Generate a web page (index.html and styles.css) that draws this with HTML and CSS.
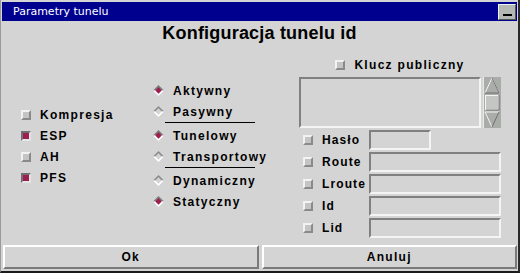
FILE: index.html
```html
<!DOCTYPE html>
<html lang="pl">
<head>
<meta charset="utf-8">
<title>Parametry tunelu</title>
<link rel="stylesheet" href="styles.css">
</head>
<body>
<div class="window">
  <div class="titlebar">
    <span class="title">Parametry tunelu</span>
    <span class="minbtn"><span class="dash"></span></span>
  </div>
  <h1 class="heading">Konfiguracja tunelu id</h1>
  <div class="main">
    <div class="col col-left">
      <div class="row"><span class="cb"></span><span class="lbl">Kompresja</span></div>
      <div class="row"><span class="cb on"></span><span class="lbl">ESP</span></div>
      <div class="row"><span class="cb"></span><span class="lbl">AH</span></div>
      <div class="row"><span class="cb on"></span><span class="lbl">PFS</span></div>
    </div>
    <div class="col col-mid">
      <div class="row"><svg class="rd" viewBox="0 0 11 11"><polygon points="5.5,0 11,5.5 0,5.5" fill="#7a7a7a"/><polygon points="0,5.5 11,5.5 5.5,11" fill="#ffffff"/><polygon points="5.5,2.3 8.7,5.5 5.5,8.7 2.3,5.5" fill="#9e1e50"/></svg><span class="lbl">Aktywny</span></div>
      <div class="row"><svg class="rd" viewBox="0 0 11 11"><polygon points="5.5,0 11,5.5 0,5.5" fill="#8c8c8c"/><polygon points="0,5.5 11,5.5 5.5,11" fill="#ffffff"/><polygon points="5.5,2.3 8.7,5.5 5.5,8.7 2.3,5.5" fill="#d4d4d4"/></svg><span class="lbl">Pasywny</span></div>
      <div class="sep"></div>
      <div class="row"><svg class="rd" viewBox="0 0 11 11"><polygon points="5.5,0 11,5.5 0,5.5" fill="#7a7a7a"/><polygon points="0,5.5 11,5.5 5.5,11" fill="#ffffff"/><polygon points="5.5,2.3 8.7,5.5 5.5,8.7 2.3,5.5" fill="#9e1e50"/></svg><span class="lbl">Tunelowy</span></div>
      <div class="row"><svg class="rd" viewBox="0 0 11 11"><polygon points="5.5,0 11,5.5 0,5.5" fill="#8c8c8c"/><polygon points="0,5.5 11,5.5 5.5,11" fill="#ffffff"/><polygon points="5.5,2.3 8.7,5.5 5.5,8.7 2.3,5.5" fill="#d4d4d4"/></svg><span class="lbl">Transportowy</span></div>
      <div class="sep"></div>
      <div class="row"><svg class="rd" viewBox="0 0 11 11"><polygon points="5.5,0 11,5.5 0,5.5" fill="#8c8c8c"/><polygon points="0,5.5 11,5.5 5.5,11" fill="#ffffff"/><polygon points="5.5,2.3 8.7,5.5 5.5,8.7 2.3,5.5" fill="#d4d4d4"/></svg><span class="lbl">Dynamiczny</span></div>
      <div class="row"><svg class="rd" viewBox="0 0 11 11"><polygon points="5.5,0 11,5.5 0,5.5" fill="#7a7a7a"/><polygon points="0,5.5 11,5.5 5.5,11" fill="#ffffff"/><polygon points="5.5,2.3 8.7,5.5 5.5,8.7 2.3,5.5" fill="#9e1e50"/></svg><span class="lbl">Statyczny</span></div>
    </div>
    <div class="col col-right">
      <div class="keyrow"><span class="cb"></span><span class="lbl">Klucz publiczny</span></div>
      <div class="textrow">
        <div class="textarea"></div>
        <svg class="scroll" viewBox="0 0 18 51">
          <rect x="0" y="0" width="18" height="51" fill="#a9aca9"/>
          <line x1="0.5" y1="0" x2="0.5" y2="51" stroke="#e8e8e8"/>
          <polyline points="2,16 9,1 16,16" fill="none" stroke="#f4f4f4" stroke-width="1"/>
          <line x1="9" y1="1" x2="16" y2="16" stroke="#707070"/>
          <line x1="2" y1="16" x2="16" y2="16" stroke="#707070"/>
          <rect x="2.5" y="18.5" width="13" height="14" fill="#c4c6c4" stroke="#f4f4f4"/>
          <polyline points="3,33 16,33 16,18" fill="none" stroke="#707070"/>
          <polyline points="2,35 16,35" fill="none" stroke="#f4f4f4"/>
          <polyline points="2,35 9,50" fill="none" stroke="#f4f4f4"/>
          <line x1="16" y1="35" x2="9" y2="50" stroke="#707070"/>
        </svg>
      </div>
      <div class="frow"><span class="cb"></span><span class="flbl">Hasło</span><span class="input short"></span></div>
      <div class="frow"><span class="cb"></span><span class="flbl">Route</span><span class="input"></span></div>
      <div class="frow"><span class="cb"></span><span class="flbl">Lroute</span><span class="input"></span></div>
      <div class="frow"><span class="cb"></span><span class="flbl">Id</span><span class="input"></span></div>
      <div class="frow"><span class="cb"></span><span class="flbl">Lid</span><span class="input"></span></div>
    </div>
  </div>
  <div class="buttons">
    <button class="btn">Ok</button>
    <button class="btn">Anuluj</button>
  </div>
</div>
</body>
</html>
```
FILE: styles.css
```css
html, body {
  margin: 0;
  padding: 0;
  background: #d4d4d4;
}
.window {
  width: 520px;
  height: 273px;
  box-sizing: border-box;
  background: #d4d4d4;
  border-left: 1px solid #9a9a9a;
  border-right: 2px solid #2a2a2a;
  border-bottom: 2px solid #1a1a1a;
  padding: 2px 1px 0 1px;
  display: flex;
  flex-direction: column;
  font-family: "Liberation Sans", Arial, sans-serif;
}
.titlebar {
  height: 19px;
  background: #00008f;
  display: flex;
  align-items: center;
  justify-content: space-between;
  padding-left: 11px;
  box-sizing: border-box;
}
.title {
  color: #ffffff;
  font-family: "DejaVu Sans", sans-serif;
  font-size: 11px;
  line-height: 19px;
}
.minbtn {
  width: 18px;
  height: 16px;
  box-sizing: border-box;
  margin-right: 1px;
  background: #b4b8b4;
  border-top: 1px solid #f0f0f0;
  border-left: 1px solid #f0f0f0;
  border-right: 1px solid #555555;
  border-bottom: 1px solid #555555;
  display: flex;
  align-items: flex-end;
  justify-content: center;
  padding-bottom: 3px;
}
.dash {
  width: 9px;
  height: 2px;
  background: #000;
}
.heading {
  margin: 0;
  height: 23px;
  box-sizing: border-box;
  padding-top: 2px;
  font-size: 18px;
  line-height: 21px;
  font-weight: bold;
  letter-spacing: 0.2px;
  text-align: center;
  color: #000;
}
.main {
  height: 201px;
  display: flex;
  padding-left: 19px;
}
.col {
  display: flex;
  flex-direction: column;
}
.col-left {
  width: 132px;
  padding-top: 60px;
}
.col-mid {
  width: 146px;
  padding-top: 36px;
}
.col-right {
  width: 202px;
  padding-top: 11px;
}
.row {
  height: 21px;
  display: flex;
  align-items: center;
}
.lbl, .flbl, .btn {
  font-family: "Liberation Sans", Arial, sans-serif;
  font-weight: bold;
  font-size: 12px;
  letter-spacing: 1.3px;
  color: #000;
}
.cb {
  width: 10px;
  height: 10px;
  box-sizing: border-box;
  flex: none;
  background: #c4c4c4;
  border-top: 2px solid #f2f2f2;
  border-left: 2px solid #f2f2f2;
  border-right: 2px solid #8a8a8a;
  border-bottom: 2px solid #8a8a8a;
  margin-right: 9px;
}
.cb.on {
  background: #9e1e50;
  border-top-color: #707070;
  border-left-color: #707070;
  border-right-color: #e4e4e4;
  border-bottom-color: #e4e4e4;
}
.rd {
  width: 11px;
  height: 11px;
  flex: none;
  margin-right: 9px;
}
.sep {
  width: 90px;
  height: 1px;
  background: #000;
  margin: 0 0 2px 12px;
}
.keyrow {
  height: 20px;
  margin-bottom: 2px;
  display: flex;
  align-items: center;
  justify-content: center;
}
.textrow {
  height: 51px;
  margin-bottom: 2px;
  display: flex;
  gap: 2px;
}
.textarea {
  width: 182px;
  height: 51px;
  box-sizing: border-box;
  border-top: 2px solid #808080;
  border-left: 2px solid #808080;
  border-right: 2px solid #f4f4f4;
  border-bottom: 2px solid #f4f4f4;
}
.scroll {
  width: 18px;
  height: 51px;
  display: block;
}
.frow {
  height: 20px;
  margin-bottom: 2px;
  display: flex;
  align-items: center;
  padding-left: 4px;
}
.flbl {
  width: 47px;
  flex: none;
  letter-spacing: 1.1px;
}
.input {
  width: 132px;
  height: 20px;
  box-sizing: border-box;
  border-top: 2px solid #808080;
  border-left: 2px solid #808080;
  border-right: 2px solid #f4f4f4;
  border-bottom: 2px solid #f4f4f4;
}
.input.short {
  width: 62px;
}
.buttons {
  height: 24px;
  display: flex;
  gap: 3px;
  padding-left: 1px;
  margin-bottom: 2px;
}
.btn {
  flex: 1;
  height: 24px;
  margin: 0;
  padding: 0;
  background: #d4d4d4;
  border-top: 2px solid #ffffff;
  border-left: 2px solid #ffffff;
  border-right: 2px solid #7a7a7a;
  border-bottom: 2px solid #7a7a7a;
  border-radius: 0;
  text-align: center;
}
```
